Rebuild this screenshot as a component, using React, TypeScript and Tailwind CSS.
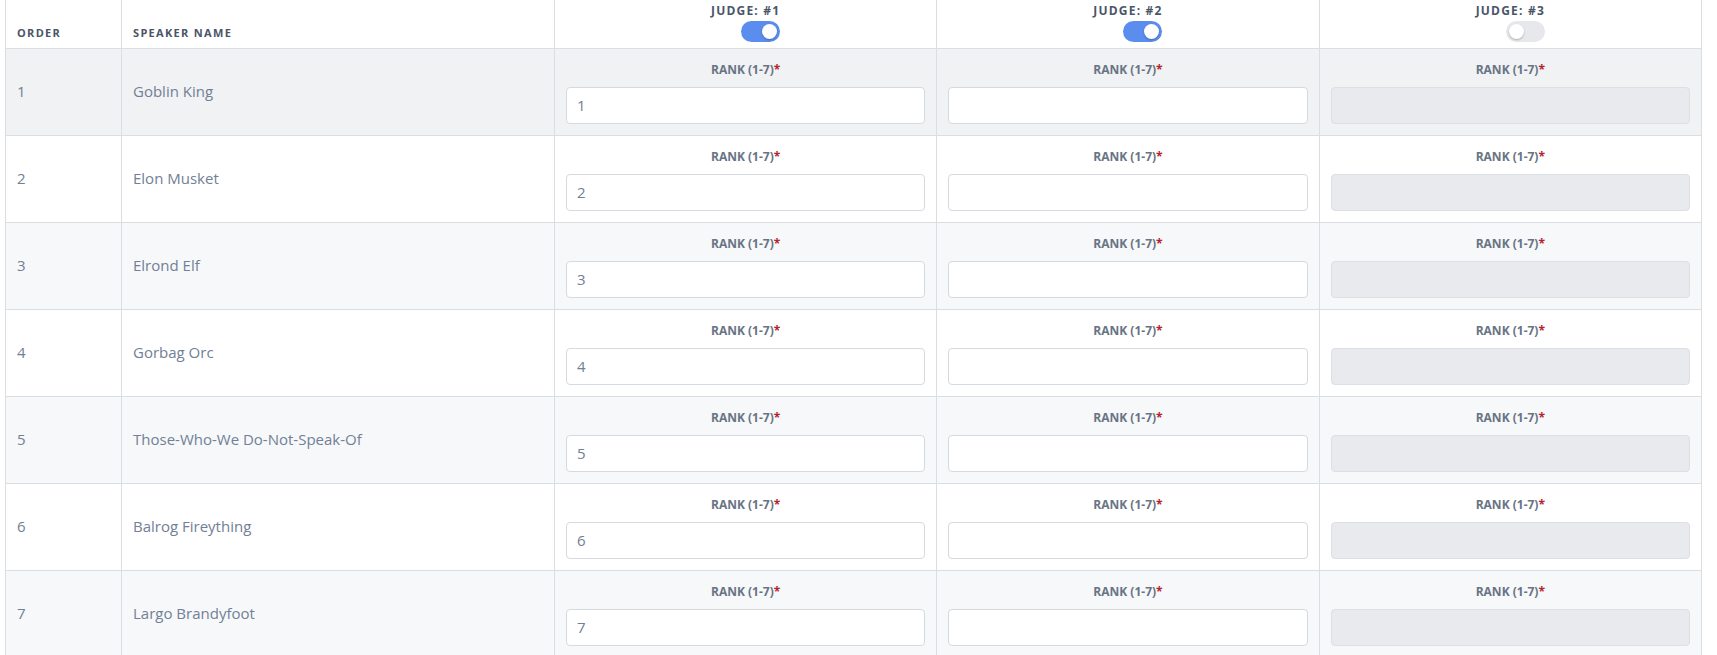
import React from 'react';

type Speaker = {
  order: number;
  name: string;
};

const speakers: Speaker[] = [
  { order: 1, name: 'Goblin King' },
  { order: 2, name: 'Elon Musket' },
  { order: 3, name: 'Elrond Elf' },
  { order: 4, name: 'Gorbag Orc' },
  { order: 5, name: 'Those-Who-We Do-Not-Speak-Of' },
  { order: 6, name: 'Balrog Fireything' },
  { order: 7, name: 'Largo Brandyfoot' },
];

const judges = [
  { id: 1, on: true },
  { id: 2, on: true },
  { id: 3, on: false },
];

function Toggle({ on }: { on: boolean }) {
  return (
    <div
      className={`flex h-[21px] w-[39px] items-center rounded-full px-[3px] ${
        on ? 'justify-end bg-[#5b8def]' : 'justify-start bg-[#e6e8eb]'
      }`}
    >
      <span className="h-[15px] w-[15px] rounded-full bg-white shadow-[0_1px_2px_rgba(0,0,0,0.25)]" />
    </div>
  );
}

function RankCell({ value, enabled }: { value: string; enabled: boolean }) {
  return (
    <td className="border-x border-[#dadde2] px-[11px] pt-[13px] pb-[11px] align-top">
      <div className="mb-[9px] h-4 text-center text-[12px] leading-4 font-bold text-[#687484]">
        RANK (1-7)<span className="text-[#b4232a]">*</span>
      </div>
      {enabled ? (
        <div className="flex h-[37px] items-center rounded-[4px] border border-[#d6d9de] bg-white px-[10px] text-[15px] text-[#718096]">
          {value}
        </div>
      ) : (
        <div className="h-[37px] rounded-[4px] border border-[#dcdfe3] bg-[#e8eaed]" />
      )}
    </td>
  );
}

export default function App() {
  return (
    <div className="min-h-screen bg-white pl-[5px] pr-[15px] font-['Open_Sans',sans-serif]">
      <table className="w-full table-fixed border-collapse border-x border-[#dadde2]">
        <colgroup>
          <col className="w-[116px]" />
          <col className="w-[433px]" />
          <col />
          <col />
          <col />
        </colgroup>
        <thead>
          <tr className="h-[48px] border-b border-[#dadde2] bg-white">
            <th className="border-x border-[#dadde2] px-[11px] pb-[7px] text-left align-bottom text-[11px] leading-4 font-bold tracking-[0.12em] text-[#4a5568]">
              ORDER
            </th>
            <th className="border-x border-[#dadde2] px-[11px] pb-[7px] text-left align-bottom text-[11px] leading-4 font-bold tracking-[0.12em] text-[#4a5568]">
              SPEAKER NAME
            </th>
            {judges.map((j) => (
              <th key={j.id} className="border-x border-[#dadde2] px-[11px] pt-[3px] pb-[5px] align-top">
                <div className="h-4 text-center text-[12px] leading-4 font-bold tracking-[0.1em] text-[#4a5568]">
                  JUDGE: #{j.id}
                </div>
                <div className="mt-[2px] flex justify-center">
                  <div className="pl-[30px]">
                    <Toggle on={j.on} />
                  </div>
                </div>
              </th>
            ))}
          </tr>
        </thead>
        <tbody>
          {speakers.map((s, i) => {
            const bg = i === 0 ? 'bg-[#f1f2f4]' : i % 2 === 0 ? 'bg-[#f7f8fa]' : 'bg-white';
            return (
              <tr key={s.order} className={`h-[87px] border-b border-[#dadde2] ${bg}`}>
                <td className="border-x border-[#dadde2] px-[11px] align-middle text-[15px] text-[#718096]">
                  {s.order}
                </td>
                <td className="border-x border-[#dadde2] px-[11px] align-middle text-[15px] text-[#718096]">
                  {s.name}
                </td>
                {judges.map((j) => (
                  <RankCell key={j.id} value={j.id === 1 ? String(s.order) : ''} enabled={j.on} />
                ))}
              </tr>
            );
          })}
        </tbody>
      </table>
    </div>
  );
}
